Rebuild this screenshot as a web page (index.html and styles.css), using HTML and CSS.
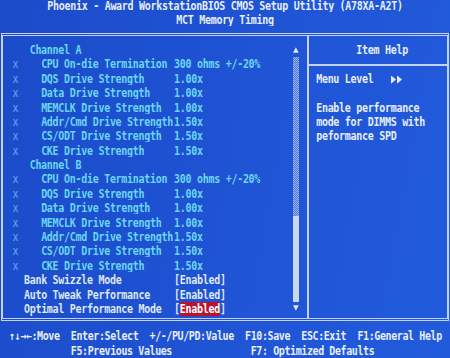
FILE: index.html
```html
<!DOCTYPE html>
<html lang="en">
<head>
<meta charset="utf-8">
<title>MCT Memory Timing</title>
<link rel="stylesheet" href="styles.css">
</head>
<body>
<div class="screen">
  <header class="head">
    <div class="tline">Phoenix - Award WorkstationBIOS CMOS Setup Utility (A78XA-A2T)</div>
    <div class="tline">MCT Memory Timing</div>
  </header>

  <main class="box">
    <section class="left">
      <div class="list">
        <div class="row ch">Channel A</div>
        <div class="row item"><span class="x">x</span><span class="lbl">CPU On-die Termination</span><span class="val">300 ohms +/-20%</span></div>
        <div class="row item"><span class="x">x</span><span class="lbl">DQS Drive Strength</span><span class="val">1.00x</span></div>
        <div class="row item"><span class="x">x</span><span class="lbl">Data Drive Strength</span><span class="val">1.00x</span></div>
        <div class="row item"><span class="x">x</span><span class="lbl">MEMCLK Drive Strength</span><span class="val">1.00x</span></div>
        <div class="row item"><span class="x">x</span><span class="lbl">Addr/Cmd Drive Strength</span><span class="val">1.50x</span></div>
        <div class="row item"><span class="x">x</span><span class="lbl">CS/ODT Drive Strength</span><span class="val">1.50x</span></div>
        <div class="row item"><span class="x">x</span><span class="lbl">CKE Drive Strength</span><span class="val">1.50x</span></div>
        <div class="row ch">Channel B</div>
        <div class="row item"><span class="x">x</span><span class="lbl">CPU On-die Termination</span><span class="val">300 ohms +/-20%</span></div>
        <div class="row item"><span class="x">x</span><span class="lbl">DQS Drive Strength</span><span class="val">1.00x</span></div>
        <div class="row item"><span class="x">x</span><span class="lbl">Data Drive Strength</span><span class="val">1.00x</span></div>
        <div class="row item"><span class="x">x</span><span class="lbl">MEMCLK Drive Strength</span><span class="val">1.00x</span></div>
        <div class="row item"><span class="x">x</span><span class="lbl">Addr/Cmd Drive Strength</span><span class="val">1.50x</span></div>
        <div class="row item"><span class="x">x</span><span class="lbl">CS/ODT Drive Strength</span><span class="val">1.50x</span></div>
        <div class="row item"><span class="x">x</span><span class="lbl">CKE Drive Strength</span><span class="val">1.50x</span></div>
        <div class="row opt"><span></span><span class="olbl">Bank Swizzle Mode</span><span class="oval">[Enabled]</span></div>
        <div class="row opt"><span></span><span class="olbl">Auto Tweak Performance</span><span class="oval">[Enabled]</span></div>
        <div class="row opt"><span></span><span class="olbl">Optimal Performance Mode</span><span class="oval">[<span class="sel">Enabled</span>]</span></div>
      </div>
      <div class="scroll">
        <div class="arrow"><svg width="6" height="6" viewBox="0 0 6 6"><polygon points="3,0 6,6 0,6"/></svg></div>
        <div class="track"><div class="thumb"></div></div>
        <div class="arrow down"><svg width="6" height="6" viewBox="0 0 6 6"><polygon points="0,0 6,0 3,6"/></svg></div>
      </div>
    </section>

    <aside class="help">
      <div class="hrow htitle">Item Help</div>
      <div class="hsep"></div>
      <div class="hrow">Menu Level   <svg class="lvl" width="11" height="7" viewBox="0 0 11 7"><polygon points="0,0 5,3.5 0,7"/><polygon points="6,0 11,3.5 6,7"/></svg></div>
      <div class="hrow"> </div>
      <div class="hrow">Enable performance</div>
      <div class="hrow">mode for DIMMS with</div>
      <div class="hrow">peformance SPD</div>
    </aside>
  </main>

  <footer class="foot">
    <div class="fline">↑↓→←:Move  Enter:Select  +/-/PU/PD:Value  F10:Save  ESC:Exit  F1:General Help</div>
    <div class="fline">           F5:Previous Values              F7: Optimized Defaults</div>
  </footer>
</div>
</body>
</html>
```

FILE: styles.css
```css
:root {
  --c: 5.73px;
  --lh: 14.4px;
  --line: #c4d2ee;
  --white: #e6eefa;
  --cyan: #6ad6f2;
  --xcol: #5cb0e8;
}

html, body {
  margin: 0;
  padding: 0;
  width: 450px;
  height: 358px;
  overflow: hidden;
}

body {
  background: linear-gradient(100deg, #1b4bc9 0%, #1f54d5 55%, #215bdc 100%);
  font-family: "DejaVu Sans Mono", "Liberation Mono", monospace;
  font-weight: bold;
  font-size: 10px;
  letter-spacing: -0.29px;
  line-height: var(--lh);
  color: var(--white);
}

.screen {
  width: 450px;
}

.head {
  margin-top: -1px;
  text-align: center;
}

.tline {
  height: var(--lh);
  white-space: pre;
  color: var(--white);
  transform: scaleY(1.18);
}

.box {
  display: flex;
  margin: 5.2px 1px 0 1px;
  border-top: 3px double var(--line);
  border-bottom: 3px double var(--line);
  border-left: 2px solid var(--line);
  border-right: 2px solid var(--line);
}

.left {
  display: flex;
  width: 303.5px;
  padding: 7px 0 1.4px 0;
  border-right: 2px solid var(--line);
}

.list {
  flex: 1;
  padding-left: 3.76px;
}

.row {
  height: var(--lh);
  white-space: pre;
  transform: scaleY(1.18);
}

.ch {
  padding-left: calc(var(--c) * 4);
  color: var(--cyan);
}

.item {
  display: grid;
  grid-template-columns: calc(var(--c) * 6) calc(var(--c) * 23 + 1.2px) auto;
}

.x {
  padding-left: var(--c);
  color: var(--xcol);
  font-weight: normal;
}

.lbl, .val {
  color: var(--cyan);
}

.opt {
  display: grid;
  grid-template-columns: calc(var(--c) * 3) calc(var(--c) * 26 + 1.2px) auto;
  color: #dfe7f4;
}

.sel {
  display: inline-block;
  line-height: 11.5px;
  background: #b8142f;
  color: #ffffff;
}

.scroll {
  width: var(--c);
  margin-right: 7.5px;
  display: flex;
  flex-direction: column;
}

.arrow {
  height: var(--lh);
  display: flex;
  align-items: center;
  justify-content: center;
}

.arrow.down {
  align-items: flex-start;
  padding-top: 3px;
  box-sizing: border-box;
}

.arrow svg {
  fill: #dfe8f6;
}

.track {
  flex: 1;
  display: flex;
  flex-direction: column;
  justify-content: flex-end;
  background: repeating-conic-gradient(#9fb8ec 0 25%, #4a74de 0 50%) 0 0 / 2px 2px;
}

.thumb {
  height: calc(var(--lh) * 6);
  background: #c9d8ec;
}

.help {
  flex: 1;
  padding: 7px 0 1.4px 0;
}

.hrow {
  height: var(--lh);
  white-space: pre;
  padding-left: 7.68px;
  color: var(--white);
  transform: scaleY(1.18);
}

.htitle {
  padding-left: calc(7.68px + var(--c) * 7);
}

.hsep {
  height: var(--lh);
  display: flex;
  align-items: center;
}

.hsep::after {
  content: "";
  flex: 1;
  height: 2px;
  background: var(--line);
}

.lvl {
  fill: var(--white);
  vertical-align: -0.5px;
}

.foot {
  margin-top: 8.5px;
  padding-left: 9px;
}

.fline {
  height: var(--lh);
  white-space: pre;
  letter-spacing: -0.4px;
  color: var(--white);
  transform: scaleY(1.18);
}
```
